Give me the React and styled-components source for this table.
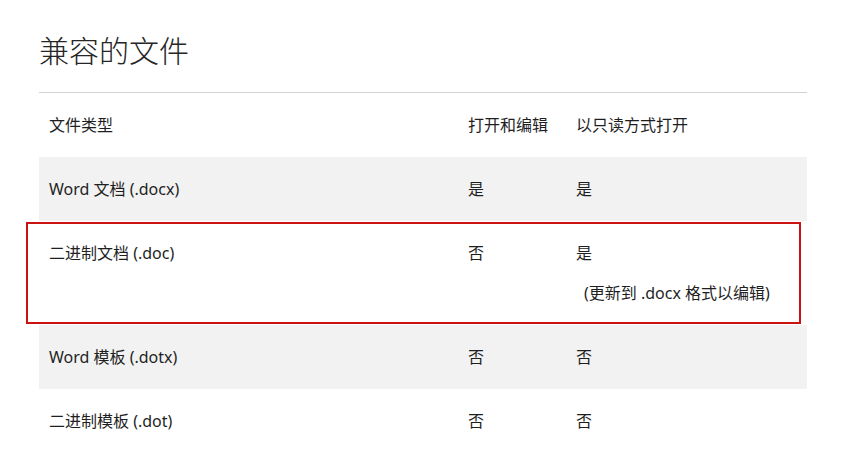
import React from "react";
import styled, { createGlobalStyle } from "styled-components";

const Global = createGlobalStyle`
  html, body { margin: 0; padding: 0; background: #ffffff; }
  body {
    font-family: "Noto Sans", "Noto Sans CJK SC", sans-serif;
    color: #1f1f1f;
  }
`;

const Page = styled.div`
  width: 768px;
  padding: 29px 0 0 39px;
`;

const Title = styled.h1`
  margin: 0;
  font-family: "Noto Sans CJK SC", sans-serif;
  font-size: 30px;
  font-weight: 300;
  line-height: 40px;
  color: #262626;
  height: 63px;
`;

const Divider = styled.hr`
  margin: 0;
  border: 0;
  border-top: 1px solid #d2d2d2;
`;

const Table = styled.div`
  display: flex;
  flex-direction: column;
`;

const Row = styled.div`
  position: relative;
  display: grid;
  grid-template-columns: 419px 108px 1fr;
  background: ${(p) => (p.$shaded ? "#f2f2f2" : "#ffffff")};
`;

const Cell = styled.div`
  padding: 20px 10px;
  font-size: 16px;
  line-height: 24px;
  font-family: "Noto Sans", "Noto Sans CJK SC", sans-serif;
`;

const Note = styled.p`
  margin: 16px 0 0;
  padding-left: 8px;
`;

const Highlight = styled.div`
  position: absolute;
  left: -13px;
  right: 6px;
  top: 1px;
  bottom: 1px;
  border: 2px solid #cc1111;
  pointer-events: none;
`;

const rows = [
  { type: "Word 文档 (.docx)", edit: "是", read: "是" },
  { type: "二进制文档 (.doc)", edit: "否", read: "是", note: "(更新到 .docx 格式以编辑)", mark: true },
  { type: "Word 模板 (.dotx)", edit: "否", read: "否" },
  { type: "二进制模板 (.dot)", edit: "否", read: "否" },
];

export default function App() {
  return (
    <>
      <Global />
      <Page>
        <Title>兼容的文件</Title>
        <Divider />
        <Table>
          <Row>
            <Cell>文件类型</Cell>
            <Cell>打开和编辑</Cell>
            <Cell>以只读方式打开</Cell>
          </Row>
          {rows.map((r, i) => (
            <Row key={r.type} $shaded={i % 2 === 0}>
              <Cell>{r.type}</Cell>
              <Cell>{r.edit}</Cell>
              <Cell>
                {r.read}
                {r.note && <Note>{r.note}</Note>}
              </Cell>
              {r.mark && <Highlight />}
            </Row>
          ))}
        </Table>
      </Page>
    </>
  );
}
